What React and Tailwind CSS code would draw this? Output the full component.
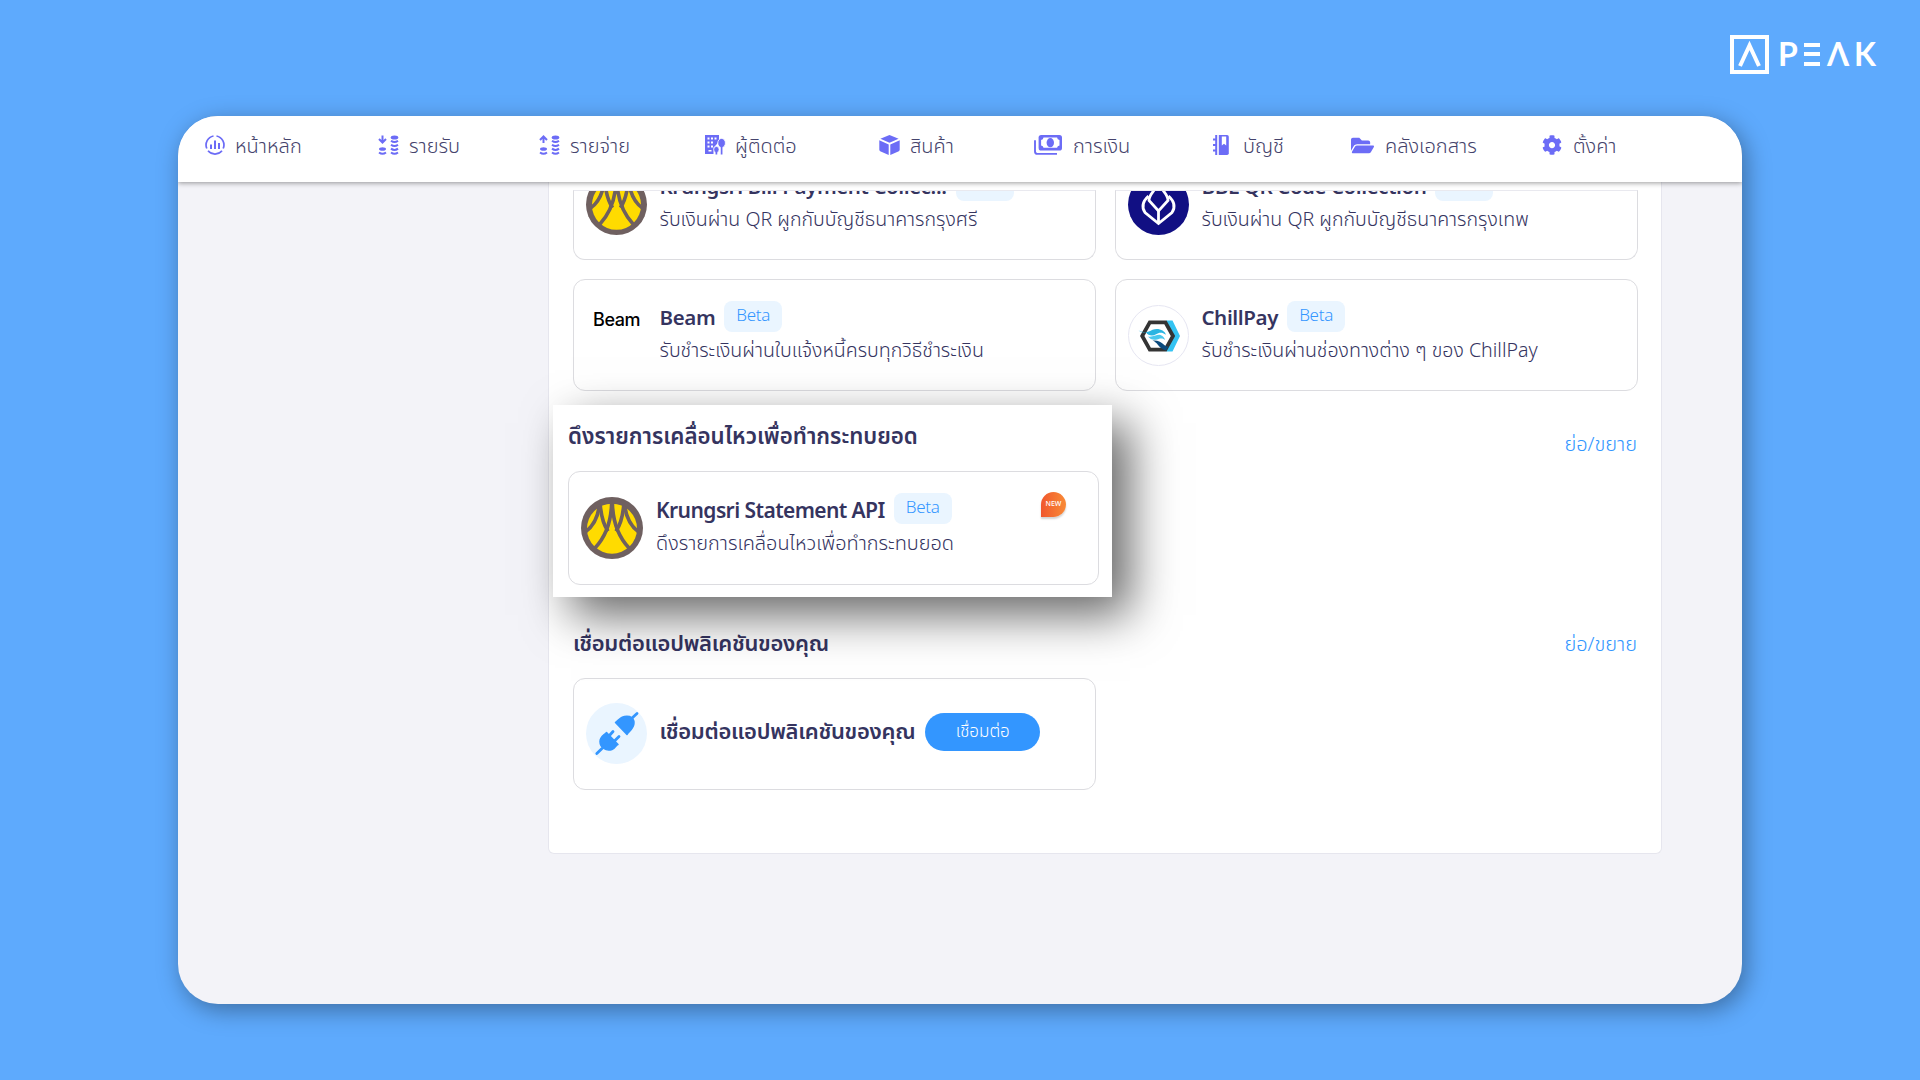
import { FaFolderOpen, FaCog } from 'react-icons/fa';
import clsx from 'clsx';

function HomeIcon() {
  return (
    <svg width="20" height="20" viewBox="0 0 20 20" fill="none" stroke="currentColor" strokeWidth="1.7">
      <path d="M8.5 1A9.1 9.1 0 0 0 1.8 13.5M11.5 1a9.1 9.1 0 0 1 6.7 12.5M3 15.8a9.1 9.1 0 0 0 14 0" />
      <path strokeWidth="2" d="M6 9.5V14M10 5.5v8.5M14 8v6" />
    </svg>
  );
}

function CoinsIcon({ up }) {
  return (
    <svg width="21" height="21" viewBox="0 0 21 21" fill="none" stroke="currentColor" strokeWidth="2">
      <path d={up ? 'M4.5 8V2.5M1 5l3.5-3.5L8 5' : 'M4.5 0.5V6M1 4l3.5 3.5L8 4'} />
      <ellipse cx="4.5" cy="14" rx="3.5" ry="1.8" fill="currentColor" stroke="none" />
      <ellipse cx="16.5" cy="2.5" rx="3.8" ry="2" fill="currentColor" stroke="none" />
      <path d="M1 17.5q3.5 2.6 7 0" />
      <path d="M13 5.8q3.5 2.6 7 0M13 9.8q3.5 2.6 7 0M13 13.6q3.5 2.6 7 0M13 17.5q3.5 2.6 7 0" />
    </svg>
  );
}

function ContactIcon() {
  return (
    <svg width="21" height="20" viewBox="0 0 21 20">
      <path fill="currentColor" d="M0 0h14v5.5l-2.5 4-3 3V19H0z" />
      <path fill="#fff" d="M2.5 2.5h2v2h-2zM6 2.5h2v2H6zM9.5 2.5h2v2h-2zM2.5 6.5h2v2h-2zM6 6.5h2v2H6zM2.5 10.5h2v2h-2zM6 10.5h2v2H6zM3.5 15h3v1.5h-3z" />
      <ellipse cx="16.6" cy="8" rx="3.8" ry="4.6" fill="currentColor" stroke="#fff" strokeWidth="0.8" />
      <ellipse cx="11.4" cy="14.5" rx="2.6" ry="3" fill="currentColor" stroke="#fff" strokeWidth="0.6" />
      <path stroke="currentColor" strokeWidth="1.7" d="M16.6 11v8.6M11.4 16v3.6" />
    </svg>
  );
}

function BoxIcon() {
  return (
    <svg width="21" height="20" viewBox="0 0 21 20" fill="currentColor">
      <path d="M10.5 0 19.6 3.7 10.5 7.8 1.4 3.7z" />
      <path d="M0.3 5.3 9.7 9.5V20L1.2 16.2Q0.3 15.7 0.3 14.8zM20.7 5.3 11.3 9.5V20l8.5-3.8q.9-.5.9-1.4z" />
    </svg>
  );
}

function MoneyIcon() {
  return (
    <svg width="28" height="20" viewBox="0 0 28 20">
      <path fill="none" stroke="currentColor" strokeWidth="1.9" d="M1 5.2v11.3q0 2.4 2.4 2.4H23" />
      <rect x="4.6" y="0" width="23.4" height="15.6" rx="2.6" fill="currentColor" />
      <path fill="#fff" d="M9.5 2.6h13.6q.2 2.1 2.4 2.3v5.6q-2.2.2-2.4 2.3H9.5q-.2-2.1-2.4-2.3V4.9q2.2-.2 2.4-2.3z" />
      <ellipse cx="16.3" cy="7.7" rx="3.7" ry="4.6" fill="currentColor" />
    </svg>
  );
}

function LedgerIcon() {
  return (
    <svg width="16" height="20" viewBox="0 0 16 20">
      <path fill="none" stroke="currentColor" strokeWidth="2" d="M3.2 0v20M0 4.5h3.5M0 10h3.5M0 15.5h3.5" />
      <path fill="currentColor" d="M5.8 0H14q1.8 0 1.8 1.8v16.4Q15.8 20 14 20H5.8z" />
      <path fill="#fff" d="M8.8 1.6h4.4v8.8L11 8.700l-2.200 1.700z" />
    </svg>
  );
}

function KrungsriLogo({ size = 61 }) {
  return (
    <svg width={size} height={size} viewBox="20 21 186 186" className="shrink-0">
      <clipPath id="krungsri">
        <circle cx="113" cy="116" r="77" />
      </clipPath>
      <circle cx="113" cy="114" r="93" fill="#6f6060" />
      <circle cx="113" cy="116" r="75" fill="#ffdb00" />
      <g clipPath="url(#krungsri)" fill="none" stroke="#6f6060" strokeWidth="11">
        <path d="M112 35Q111 122 62 174M114 35Q115 122 164 174" />
        <path d="M76 35Q72 100 30 128M150 35Q154 100 196 128" />
        <path d="M77 35Q80 92 101 124M149 35Q146 92 125 124" />
      </g>
    </svg>
  );
}

function BangkokBankLogo() {
  return (
    <svg width="61" height="61" viewBox="0 0 61 61" className="shrink-0">
      <circle cx="30.5" cy="30.5" r="30.5" fill="#110f83" />
      <g fill="none" stroke="#fff" strokeWidth="2.800">
        <path d="M30.500 9C27 17 21 20 21 26.500L30.500 37 40 26.500C40 20 34 17 30.500 9z" />
        <path d="M20.500 22C14 28 14 34 17 38.500L30.500 49.500 44 38.500C47 34 47 28 40.500 22M30.500 37v12" />
      </g>
    </svg>
  );
}

function ChillPayLogo() {
  return (
    <svg width="61" height="61" viewBox="0 0 61 61" className="shrink-0">
      <circle cx="30.5" cy="30.5" r="30" fill="#fff" stroke="#e6e6f2" />
      <path fill="#34c3f2" d="M38 15.5h6.5L52 31l-7.500 15.500H38L45.500 31z" />
      <path fill="#fff" stroke="#343434" strokeWidth="3.8" d="M14.2 31 21.8 17.4h15.6L45 31l-7.600 13.600H21.800z" />
      <path fill="#2ab5e2" d="M10.5 25.3c6 3.5 10 1.5 14-.5 6-2 12 .5 13.5 5-4-3-7-2.5-10-.5s-8 1.500-10-2c-3 .5-5.500 0-7.500-2z" />
      <path fill="#49c8ee" d="M20 31.5c5 1 9-2.5 12.5-1.5 3 1 4 3 4.500 5-3-2.500-5-1.500-8-.5-4 1-7-.5-9-3z" />
      <path fill="#0b4a7d" d="M24.5 35.5c5-.5 8 1 10 3 2.500 2.500 4 3 6 3l-2.500 4c-4-1-6-3-8-5.500-1.500-2-3-3.500-5.500-4.500z" />
    </svg>
  );
}

function PlugLogo() {
  return (
    <svg width="61" height="61" viewBox="0 0 61 61" className="shrink-0">
      <circle cx="30.5" cy="30.5" r="30.5" fill="#eaf5ff" />
      <g fill="#3396ff" stroke="#3396ff" strokeLinecap="round" strokeLinejoin="round">
        <path strokeWidth="1.5" d="M29.5 19.5 41 31.5C42 29 48 26 48 20c0-3-2-5.500-4.500-6.500-5.500-1.500-9 1.500-14 6z" />
        <path strokeWidth="2.8" d="M45 16 51 10.5M16 45.5 10.8 50.5M23 33l4-4.5M28.5 38l4.5-4.5" />
        <path strokeWidth="1.5" d="M20.5 29.5 32 41.5c-2 0-2.500 4-6 5-6 2-12-2-12-8 0-5 3.500-6 6.500-9z" />
      </g>
    </svg>
  );
}

const menus = [
  { label: 'หน้าหลัก', icon: <HomeIcon />, width: 'w-[173px]', gap: 'gap-[10px]' },
  { label: 'รายรับ', icon: <CoinsIcon />, width: 'w-[161px]', gap: 'gap-[10px]' },
  { label: 'รายจ่าย', icon: <CoinsIcon up />, width: 'w-[166px]', gap: 'gap-[10px]' },
  { label: 'ผู้ติดต่อ', icon: <ContactIcon />, width: 'w-[174px]', gap: 'gap-[9px]' },
  { label: 'สินค้า', icon: <BoxIcon />, width: 'w-[155px]', gap: 'gap-[10px]' },
  { label: 'การเงิน', icon: <MoneyIcon />, width: 'w-[179px]', gap: 'gap-[11px]' },
  { label: 'บัญชี', icon: <LedgerIcon />, width: 'w-[138px]', gap: 'gap-[14px]' },
  { label: 'คลังเอกสาร', icon: <FaFolderOpen size={23} />, width: 'w-[191px]', gap: 'gap-[11px]' },
  { label: 'ตั้งค่า', icon: <FaCog size={20} />, width: 'w-[90px]', gap: 'gap-[11px]' },
];

function Badge() {
  return (
    <span className="flex h-[31px] w-[58px] shrink-0 items-center justify-center rounded-lg bg-[#eaf5ff] text-[17px] font-[350] tracking-[-0.3px] text-[#3396ff]">
      Beta
    </span>
  );
}

function AppCard({ logo, title, desc, descClass, className, large, children }) {
  return (
    <div className={clsx('flex items-start rounded-xl border border-[#dcdce0] pt-[21px]', className)}>
      <div className={clsx('h-[61px] shrink-0', large ? 'mt-[4px] mr-[13px] w-[62px]' : 'mt-[4px] mr-[12.5px] w-[61px]')}>{logo}</div>
      <div>
        <div className="flex gap-[9px]">
          <h3
            className={clsx(
              'font-semibold whitespace-nowrap',
              large ? 'text-[21px] leading-[37px] tracking-[-0.6px]' : 'text-[20.5px] leading-[36px] tracking-[-0.4px]',
            )}
          >
            {title}
          </h3>
          <Badge />
        </div>
        <p className={clsx('font-[350] whitespace-nowrap', descClass)}>{desc}</p>
      </div>
      {children}
    </div>
  );
}

export default function App() {
  return (
    <div className="flex h-[1080px] w-[1920px] flex-col items-center overflow-hidden bg-[#5eaafd] font-['Noto_Sans_Thai','Noto_Sans',sans-serif] text-[#35345f]">
      <div className="flex h-[116px] w-full shrink-0 items-start justify-end pt-[35px] pr-[46px] text-white">
        <svg width="39" height="39" viewBox="0 0 39 39" fill="none" stroke="currentColor" strokeWidth="4">
          <path d="M2 2h35v35H2z" />
          <path d="M10 31 19.5 10.5 29 31" />
        </svg>
        <div aria-label="PEAK" className="ml-[9px] flex h-[38px] items-center font-['Lato',sans-serif] text-[32px] leading-none font-bold">
          <span className="w-[26px]">P</span>
          <span className="mr-[7px] flex h-[23px] w-[16px] flex-col justify-between">
            <i className="h-[4px] bg-white" />
            <i className="h-[4px] bg-white" />
            <i className="h-[4px] bg-white" />
          </span>
          <span className="w-[27px]">Λ</span>
          <span className="w-[20px]">K</span>
        </div>
      </div>

      <div className="flex h-[888px] w-[1564px] shrink-0 flex-col overflow-hidden rounded-[40px] bg-[#f3f3f8] shadow-[4px_6px_24px_rgba(0,0,0,0.36)]">
        <nav className="relative z-20 flex h-[66px] shrink-0 items-start bg-white pt-[13px] pl-[27px] text-[20px] shadow-[0_1px_5px_rgba(0,0,0,0.4)]">
          {menus.map((m) => (
            <div key={m.label} className={clsx('flex h-[32px] shrink-0 items-center', m.width, m.gap)}>
              <span className="text-[#6c6cf6]">{m.icon}</span>
              <span className="pt-[3px] leading-[32px] font-[350] whitespace-nowrap text-[#45436c]">{m.label}</span>
            </div>
          ))}
        </nav>

        <main className="ml-[370px] h-[672px] w-[1114px] rounded-b-md border border-t-0 border-[#e6e6ee] bg-white pt-[8px] pl-[24px]">
          <div className="flex h-[70px] gap-[19px]">
            <div className="h-[70px] w-[523px] overflow-hidden rounded-b-xl border border-[#dcdce0] border-t-[#e9e9ef]">
              <AppCard
                className="-mt-[43px] h-[112px] border-transparent pl-[11px]"
                logo={<KrungsriLogo />}
                title="Krungsri Bill Payment Collec..."
                desc="รับเงินผ่าน QR ผูกกับบัญชีธนาคารกรุงศรี"
                descClass="text-[19.6px] leading-[28px]"
              />
            </div>
            <div className="h-[70px] w-[523px] overflow-hidden rounded-b-xl border border-[#dcdce0] border-t-[#e9e9ef]">
              <AppCard
                className="-mt-[43px] h-[112px] border-transparent pl-[11px]"
                logo={<BangkokBankLogo />}
                title="BBL QR Code Collection"
                desc="รับเงินผ่าน QR ผูกกับบัญชีธนาคารกรุงเทพ"
                descClass="text-[19.6px] leading-[28px]"
              />
            </div>
          </div>

          <div className="mt-[19px] flex gap-[19px]">
            <AppCard
              className="h-[112px] w-[523px] pl-[12px]"
              logo={
                <span className="block pt-[2px] text-center font-['Inter',sans-serif] text-[18px] leading-[26px] font-medium tracking-[-0.5px] text-black">
                  Beam
                </span>
              }
              title="Beam"
              desc="รับชำระเงินผ่านใบแจ้งหนี้ครบทุกวิธีชำระเงิน"
              descClass="text-[19.6px] leading-[28px]"
            />
            <AppCard
              className="h-[112px] w-[523px] pl-[12px]"
              logo={<ChillPayLogo />}
              title="ChillPay"
              desc="รับชำระเงินผ่านช่องทางต่าง ๆ ของ ChillPay"
              descClass="text-[19.6px] leading-[28px]"
            />
          </div>

          <div className="mt-[14px] flex h-[192px]">
            <section className="relative z-10 -ml-[20px] w-[559px] shrink-0 bg-white pt-[15px] pl-[15px] shadow-[18px_18px_44px_rgba(0,0,0,0.6)]">
              <h2 className="h-[51px] text-[22.3px] leading-[34px] font-semibold whitespace-nowrap">ดึงรายการเคลื่อนไหวเพื่อทำกระทบยอด</h2>
              <AppCard
                large
                className="h-[114px] w-[531px] pl-[12px]"
                logo={<KrungsriLogo size={62} />}
                title="Krungsri Statement API"
                desc="ดึงรายการเคลื่อนไหวเพื่อทำกระทบยอด"
                descClass="text-[19.9px] leading-[28px]"
              >
                <span className="mt-[-1px] mr-[32px] ml-auto flex size-[25px] items-center justify-center rounded-full rounded-bl-none bg-linear-to-r from-[#f0562d] to-[#f88a37] text-[7px] font-medium text-white shadow-[0_2px_2px_rgba(0,0,0,0.18)]">
                  NEW
                </span>
              </AppCard>
            </section>
            <a className="mt-[24px] mr-[24px] ml-auto text-[20px] leading-[32px] font-[350] text-[#3396ff]">ย่อ/ขยาย</a>
          </div>

          <div className="mt-[32px] flex h-[49px] items-start justify-between pr-[24px]">
            <h2 className="text-[22px] leading-[32px] font-semibold tracking-[-0.3px]">เชื่อมต่อแอปพลิเคชันของคุณ</h2>
            <a className="text-[20px] leading-[32px] font-[350] text-[#3396ff]">ย่อ/ขยาย</a>
          </div>
          <div className="flex h-[112px] w-[523px] items-start rounded-xl border border-[#dcdce0] pt-[24px] pl-[12px]">
            <PlugLogo />
            <h3 className="mt-[14px] ml-[12.5px] text-[22px] leading-[32px] font-semibold tracking-[-0.3px] whitespace-nowrap">เชื่อมต่อแอปพลิเคชันของคุณ</h3>
            <button className="mt-[10px] ml-[10px] h-[38px] w-[115px] rounded-full bg-[#3396ff] text-[17px] leading-[36px] font-[350] text-white">
              เชื่อมต่อ
            </button>
          </div>
        </main>
      </div>
    </div>
  );
}
